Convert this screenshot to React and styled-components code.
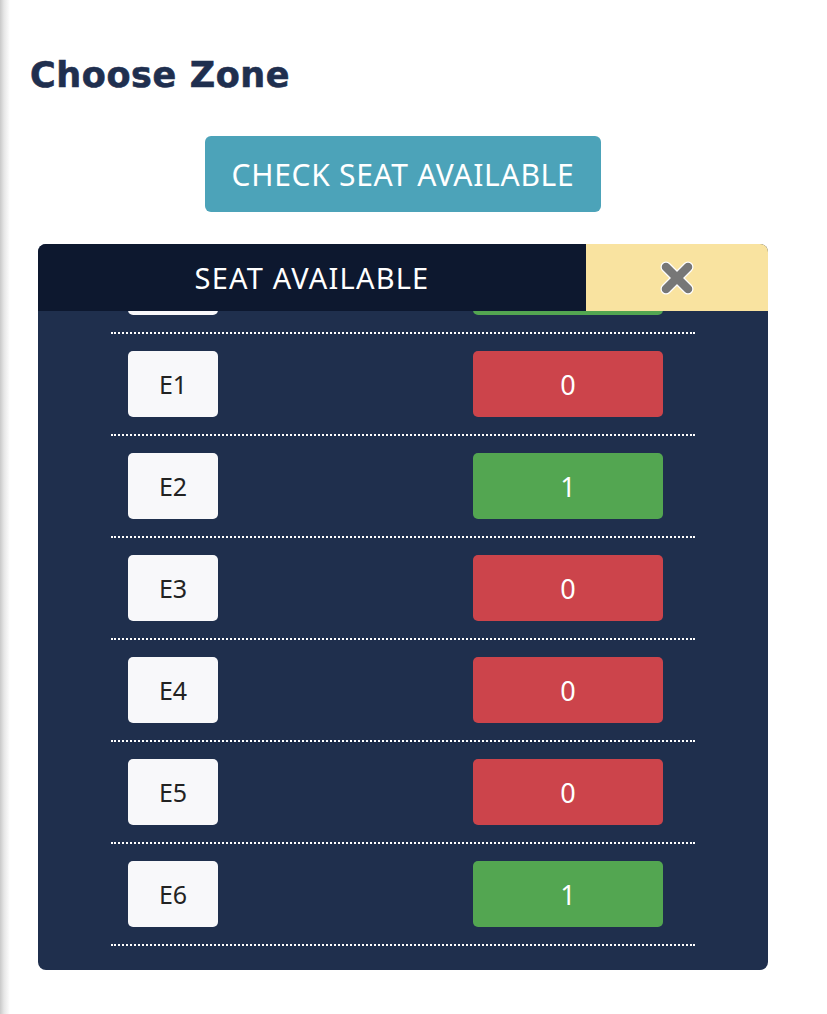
import React, { useLayoutEffect, useRef } from 'react'
import styled, { createGlobalStyle } from 'styled-components'

const GlobalStyle = createGlobalStyle`
  html, body {
    margin: 0;
    padding: 0;
    background: #ffffff;
    font-family: "Noto Sans", "DejaVu Sans", sans-serif;
  }
`

const Page = styled.div`
  min-height: 1014px;
  background: linear-gradient(to right, #c9c9c9 0px, #e6e6e6 4px, #ffffff 10px);
  padding-top: 52px;
  box-sizing: border-box;
`

const Content = styled.div`
  width: 730px;
  margin-left: 38px;
  display: flex;
  flex-direction: column;
  align-items: center;
`

const Title = styled.h2`
  align-self: flex-start;
  margin: 0 0 0 -8px;
  font-family: "DejaVu Sans", "Noto Sans", sans-serif;
  font-size: 35px;
  line-height: 46px;
  font-weight: 700;
  letter-spacing: 0.6px;
  color: #1f2f4f;
  -webkit-text-stroke: 0.6px #1f2f4f;
`

const CheckButton = styled.button`
  margin-top: 38px;
  width: 396px;
  height: 76px;
  border: none;
  border-radius: 6px;
  background: #4ca3b9;
  color: #ffffff;
  font-family: inherit;
  font-size: 30px;
  letter-spacing: 0.7px;
  padding: 0;
  cursor: pointer;
`

const Panel = styled.div`
  margin-top: 32px;
  width: 730px;
  height: 726px;
  border-radius: 8px;
  overflow: hidden;
  background: #1f2f4d;
  display: flex;
  flex-direction: column;
`

const Header = styled.div`
  display: flex;
  height: 67px;
  flex-shrink: 0;
`

const HeaderTitle = styled.div`
  flex: 1;
  background: #0d182f;
  color: #ffffff;
  font-size: 29px;
  letter-spacing: 1.2px;
  display: flex;
  align-items: center;
  justify-content: center;
`

const CloseButton = styled.button`
  width: 182px;
  border: none;
  background: #f9e3a0;
  display: flex;
  align-items: center;
  justify-content: center;
  cursor: pointer;
  padding: 0;
`

const List = styled.div`
  flex: 1;
  overflow-y: auto;
  padding: 0 73px 24px;
  scrollbar-width: none;
  &::-webkit-scrollbar {
    display: none;
  }
`

const Row = styled.div`
  display: flex;
  justify-content: space-between;
  align-items: center;
  padding: 17px 32px 17px 17px;
  border-bottom: 2px dotted #ffffff;
`

const Seat = styled.div`
  width: 90px;
  height: 66px;
  border-radius: 5px;
  background: #f8f8fa;
  color: #222222;
  font-size: 25px;
  display: flex;
  align-items: center;
  justify-content: center;
`

const Count = styled.div`
  width: 190px;
  height: 66px;
  border-radius: 5px;
  background: ${p => (p.$free ? '#53a651' : '#cc444b')};
  color: #ffffff;
  font-size: 27px;
  display: flex;
  align-items: center;
  justify-content: center;
`

const seats = [
  { name: 'D4', count: 0 },
  { name: 'D5', count: 1 },
  { name: 'D6', count: 1 },
  { name: 'E1', count: 0 },
  { name: 'E2', count: 1 },
  { name: 'E3', count: 0 },
  { name: 'E4', count: 0 },
  { name: 'E5', count: 0 },
  { name: 'E6', count: 1 },
]

const CloseIcon = () => (
  <svg width="38" height="38" viewBox="0 0 38 38">
    <g strokeLinecap="round">
      <line x1="8" y1="8" x2="30" y2="30" stroke="#ffffff" strokeWidth="11" />
      <line x1="30" y1="8" x2="8" y2="30" stroke="#ffffff" strokeWidth="11" />
      <line x1="8" y1="8" x2="30" y2="30" stroke="#777777" strokeWidth="8.5" />
      <line x1="30" y1="8" x2="8" y2="30" stroke="#777777" strokeWidth="8.5" />
    </g>
  </svg>
)

export default function App() {
  const listRef = useRef(null)

  useLayoutEffect(() => {
    if (listRef.current) {
      listRef.current.scrollTop = listRef.current.scrollHeight
    }
  }, [])

  return (
    <>
      <GlobalStyle />
      <Page>
        <Content>
          <Title>Choose Zone</Title>
          <CheckButton>CHECK SEAT AVAILABLE</CheckButton>
          <Panel>
            <Header>
              <HeaderTitle>SEAT AVAILABLE</HeaderTitle>
              <CloseButton aria-label="close">
                <CloseIcon />
              </CloseButton>
            </Header>
            <List ref={listRef}>
              {seats.map(s => (
                <Row key={s.name}>
                  <Seat>{s.name}</Seat>
                  <Count $free={s.count > 0}>{s.count}</Count>
                </Row>
              ))}
            </List>
          </Panel>
        </Content>
      </Page>
    </>
  )
}
